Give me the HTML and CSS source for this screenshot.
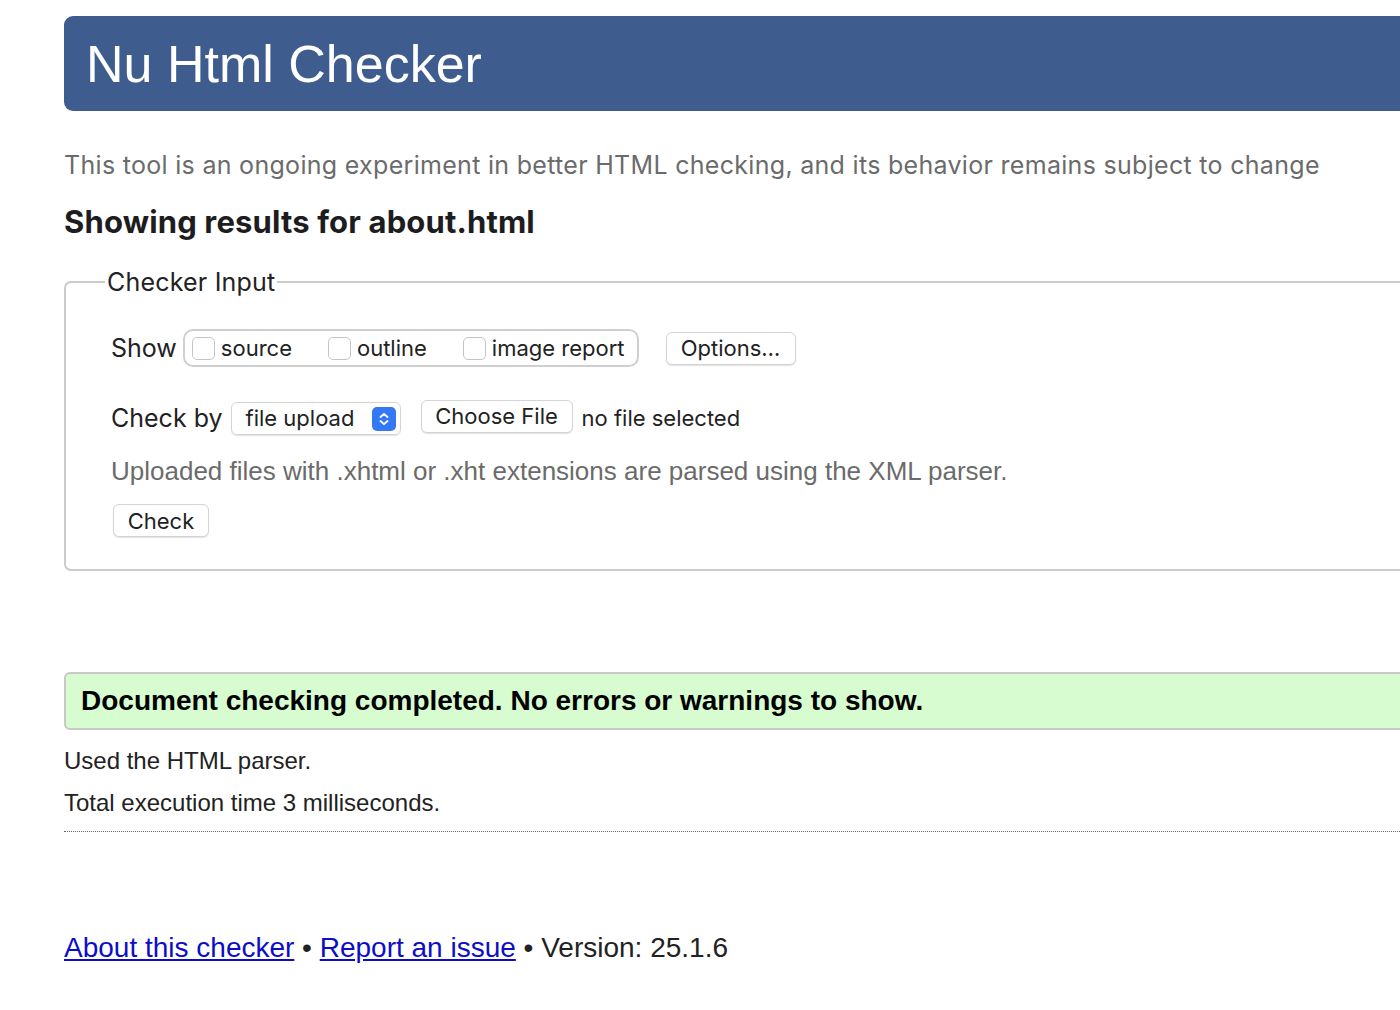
FILE: index.html
```html
<!DOCTYPE html>
<html lang="en">
<head>
<meta charset="utf-8">
<title>Showing results for about.html - Nu Html Checker</title>
<link rel="stylesheet" href="styles.css">
</head>
<body>
<div class="page">
  <h1 class="banner">Nu Html Checker</h1>
  <p class="intro">This tool is an ongoing experiment in better HTML checking, and its behavior remains subject to change</p>
  <h2 class="results-title">Showing results for about.html</h2>

  <fieldset class="checker-input">
    <legend class="legend">Checker Input</legend>
    <div class="inner">
      <div class="row row-show">
        <span class="label">Show</span>
        <div class="show-group">
          <label class="opt"><span class="box"></span>source</label>
          <label class="opt"><span class="box"></span>outline</label>
          <label class="opt"><span class="box"></span>image report</label>
        </div>
        <span class="btn btn-options">Options…</span>
      </div>
      <div class="row row-checkby">
        <span class="label">Check by</span>
        <span class="select">file upload
          <span class="stepper">
            <svg width="24" height="24" viewBox="0 0 24 24"><path d="M8.5 10 L12 6.8 L15.5 10" fill="none" stroke="#fff" stroke-width="1.8" stroke-linecap="round" stroke-linejoin="round"/><path d="M8.5 14 L12 17.2 L15.5 14" fill="none" stroke="#fff" stroke-width="1.8" stroke-linecap="round" stroke-linejoin="round"/></svg>
          </span>
        </span>
        <span class="btn btn-file">Choose File</span>
        <span class="nofile">no file selected</span>
      </div>
      <p class="hint">Uploaded files with .xhtml or .xht extensions are parsed using the XML parser.</p>
      <span class="btn btn-check">Check</span>
    </div>
  </fieldset>

  <div class="success">Document checking completed. No errors or warnings to show.</div>
  <p class="info">Used the HTML parser.</p>
  <p class="info info-time">Total execution time 3 milliseconds.</p>

  <p class="footer"><a href="#" class="flink">About this checker</a> • <a href="#" class="flink">Report an issue</a> • Version: 25.1.6</p>
</div>
</body>
</html>
```

FILE: styles.css
```css
html, body {
  margin: 0;
  padding: 0;
  background: #fff;
  overflow: hidden;
}

.page {
  margin-left: 64px;
  margin-right: -60px;
  font-family: "Liberation Sans", Arial, sans-serif;
  color: #222;
}

.banner {
  margin: 16px 0 0;
  height: 95px;
  box-sizing: border-box;
  padding-left: 22px;
  display: flex;
  align-items: center;
  background: #3f5c8f;
  border-radius: 9px 0 0 9px;
  color: #fff;
  font-family: "Liberation Sans", Arial, sans-serif;
  font-weight: normal;
  font-size: 52px;
  line-height: 60px;
}

.intro {
  margin: 39px 0 0;
  font-family: Inter, "Liberation Sans", sans-serif;
  font-size: 25px;
  letter-spacing: 0.3px;
  line-height: 30px;
  color: #6b6b6b;
  white-space: nowrap;
}

.results-title {
  margin: 24px 0 0;
  font-family: Inter, "Liberation Sans", sans-serif;
  font-weight: 700;
  font-size: 31px;
  letter-spacing: 0.15px;
  line-height: 36px;
  color: #1d1d1f;
}

.checker-input {
  margin: 27px 0 0;
  padding: 0 0 32px 39px;
  border: 2px solid #cbcbcb;
  border-radius: 7px 0 0 7px;
  font-family: Inter, "Liberation Sans", sans-serif;
}

.legend {
  padding: 0 2px;
  font-size: 25px;
  letter-spacing: 0.2px;
  line-height: 30px;
  color: #222;
}

.inner {
  padding-left: 6px;
}

.row {
  display: flex;
  align-items: center;
}

.row-show {
  margin-top: 32px;
  height: 38px;
}

.label {
  font-size: 25px;
  color: #222;
}

.show-group {
  margin-left: 6px;
  height: 38px;
  box-sizing: border-box;
  display: flex;
  align-items: center;
  border: 2px solid #cfcfcf;
  border-radius: 10px;
  padding: 0 12px 0 7px;
  gap: 36px;
}

.opt {
  display: flex;
  align-items: center;
  font-size: 22px;
  color: #222;
}

.box {
  width: 21px;
  height: 21px;
  border: 1px solid #c4c4c4;
  border-radius: 5px;
  margin-right: 6px;
  background: #fff;
}

.btn {
  display: inline-flex;
  align-items: center;
  justify-content: center;
  height: 33px;
  box-sizing: border-box;
  border: 1px solid #d4d4d4;
  border-radius: 6px;
  background: #fff;
  box-shadow: 0 1px 1px rgba(0, 0, 0, 0.12);
  font-size: 22px;
  color: #222;
  padding: 0;
  white-space: nowrap;
}

.btn-options {
  margin-left: 27px;
  width: 130px;
}

.row-checkby {
  margin-top: 34px;
  height: 34px;
}

.select {
  margin-left: 8px;
  display: inline-flex;
  align-items: center;
  height: 33px;
  width: 170px;
  box-sizing: border-box;
  border: 1px solid #d4d4d4;
  border-radius: 6px;
  box-shadow: 0 1px 1px rgba(0, 0, 0, 0.12);
  padding-left: 14px;
  font-size: 22px;
  color: #222;
  position: relative;
  white-space: nowrap;
}

.stepper {
  position: absolute;
  right: 4px;
  top: 4px;
  width: 24px;
  height: 24px;
  border-radius: 5px;
  background: #3478f6;
  display: flex;
}

.btn-file {
  margin-left: 20px;
  width: 152px;
  position: relative;
  top: -2px;
}

.nofile {
  margin-left: 9px;
  font-size: 22px;
  color: #222;
}

.hint {
  margin: 21px 0 0;
  font-family: "Liberation Sans", Arial, sans-serif;
  font-size: 26px;
  line-height: 30px;
  color: #6b6b6b;
  white-space: nowrap;
}

.btn-check {
  margin-top: 18px;
  margin-left: 2px;
  width: 96px;
}

.success {
  margin-top: 101px;
  height: 58px;
  box-sizing: border-box;
  display: flex;
  align-items: center;
  padding-left: 15px;
  background: #d6fcd0;
  border: 2px solid #c8c8c8;
  border-radius: 6px 0 0 6px;
  font-weight: 700;
  font-size: 28px;
  color: #000;
}

.info {
  margin: 16px 0 0;
  font-size: 24px;
  line-height: 30px;
  color: #222;
}

.info-time {
  margin-top: 12px;
  padding-bottom: 13px;
  border-bottom: 1px dotted #666;
}

.footer {
  margin: 99px 0 0;
  font-size: 28px;
  line-height: 34px;
  color: #222;
}

.flink {
  color: #0d0dc6;
  text-decoration: underline;
}
```
